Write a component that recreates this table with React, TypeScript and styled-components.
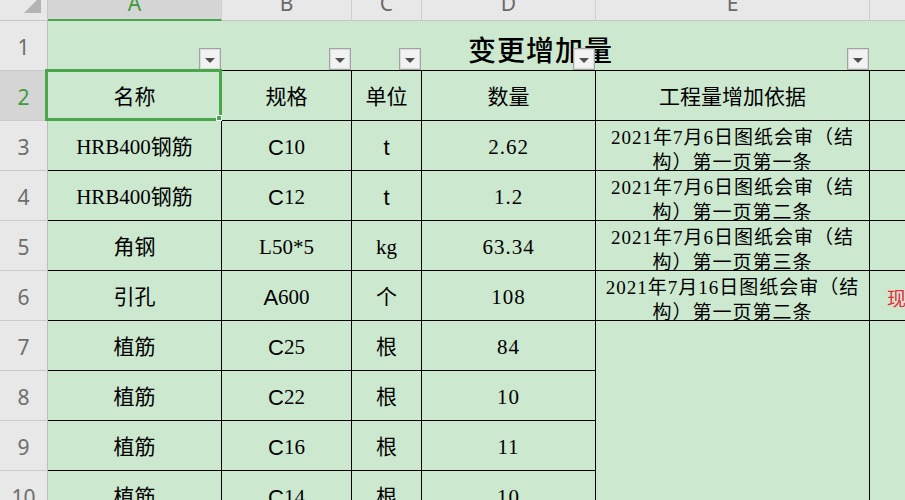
import React from "react";
import styled, { createGlobalStyle, css } from "styled-components";

const FILL = "#cce8cf";
const SEL = "#4aa64a";
const HEAD_BG = "#e8e8e8";
const HEAD_ACTIVE = "#d5d5d5";

const Global = createGlobalStyle`
  *, *::before, *::after { box-sizing: border-box; }
  html, body { margin: 0; padding: 0; overflow: hidden; background: #ffffff; }
  #root { width: 905px; height: 500px; overflow: hidden; }
`;

const Sheet = styled.div`
  display: grid;
  grid-template-columns: 48px 174px 130px 70px 174px 274px 200px;
  grid-template-rows: 21px repeat(10, 50px);
  width: max-content;
  font-family: "Liberation Serif", "Noto Sans CJK SC", serif;
  color: #000;
`;

const Corner = styled.div`
  background: ${HEAD_BG};
  border-right: 1px solid #c6c6c6;
  border-bottom: 1px solid #c6c6c6;
  display: flex;
  justify-content: flex-end;
  align-items: flex-end;
  padding: 0 6px 7px 0;
`;

const ColHead = styled.div<{ $active?: boolean }>`
  background: ${(p) => (p.$active ? HEAD_ACTIVE : HEAD_BG)};
  border-right: 1px solid #cfcfcf;
  border-bottom: ${(p) => (p.$active ? `2px solid ${SEL}` : "1px solid #c6c6c6")};
  display: flex;
  justify-content: center;
  align-items: flex-start;
  overflow: hidden;
  font-family: "Noto Sans", "Liberation Sans", sans-serif;
  font-size: 21px;
  line-height: 21px;
  color: ${(p) => (p.$active ? "#3d9b3d" : "#6a6a6a")};
`;

const ColLabel = styled.span`
  margin-top: -7px;
`;

const RowHead = styled.div<{ $active?: boolean; $row?: number }>`
  ${(p) => p.$row !== undefined && css`grid-row: ${p.$row};`}
  grid-column: 1;
  background: ${(p) => (p.$active ? HEAD_ACTIVE : HEAD_BG)};
  border-right: 1px solid #bdbdbd;
  border-bottom: 1px solid #cbcbcb;
  display: flex;
  justify-content: center;
  align-items: center;
  padding-top: 3px;
  font-family: "Noto Sans", "Liberation Sans", sans-serif;
  font-size: 21px;
  line-height: 1;
  color: ${(p) => (p.$active ? "#3d9b3d" : "#6e6e6e")};
`;

const Cell = styled.div`
  position: relative;
  background: ${FILL};
  border-right: 1px solid #000;
  border-bottom: 1px solid #000;
  display: flex;
  justify-content: center;
  align-items: center;
  padding-top: 4px;
  font-size: 21px;
  line-height: 1;
  white-space: nowrap;
`;

const TitleCell = styled.div`
  grid-row: 2;
  grid-column: 2 / 8;
  background: ${FILL};
  border-bottom: 1px solid #000;
  display: flex;
  align-items: center;
  padding: 6px 0 0 420px;
`;

const Title = styled.span`
  font-family: "Noto Sans CJK SC", sans-serif;
  font-size: 28px;
  font-weight: 500;
  letter-spacing: 1px;
  line-height: 1;
`;

const FilterButton = styled.div<{ $col: number }>`
  grid-row: 2;
  grid-column: ${(p) => p.$col};
  justify-self: end;
  align-self: end;
  width: 22px;
  height: 22px;
  margin: 0 1px 1px 0;
  background: #f2f2f2;
  border: 1px solid #a3a3a3;
  box-shadow: inset 0 0 0 1px #dcdcdc;
  display: flex;
  justify-content: center;
  align-items: center;
  padding-top: 2px;
`;

const Arrow = styled.span`
  width: 0;
  height: 0;
  border-left: 5px solid transparent;
  border-right: 5px solid transparent;
  border-top: 5px solid #505050;
`;

const Selection = styled.div`
  position: absolute;
  top: -2px;
  left: -3px;
  right: -1px;
  bottom: -1px;
  border: 3px solid ${SEL};
  z-index: 3;
  pointer-events: none;
`;

const Handle = styled.span`
  position: absolute;
  right: -3px;
  bottom: -3px;
  width: 6px;
  height: 6px;
  background: ${SEL};
  border: 1px solid #ffffff;
`;

const Sans = styled.span`
  font-family: "Liberation Sans", Arial, sans-serif;
  font-size: 22px;
`;

const Qty = styled.span`
  letter-spacing: 1px;
`;

const BasisCell = styled.div<{ $span?: number }>`
  ${(p) => p.$span && css`grid-row: span ${p.$span};`}
  background: ${FILL};
  border-right: 1px solid #000;
  border-bottom: 1px solid #000;
  display: flex;
  flex-direction: column;
  align-items: center;
  justify-content: center;
  padding-top: 9px;
  font-size: 19px;
  letter-spacing: 1px;
  line-height: 25px;
  white-space: nowrap;
`;

const NoteCell = styled.div<{ $span?: number }>`
  ${(p) => p.$span && css`grid-row: span ${p.$span};`}
  background: ${FILL};
  border-right: 1px solid #000;
  border-bottom: 1px solid #000;
  display: flex;
  align-items: center;
  padding: 3px 0 0 17px;
  font-family: "Noto Sans CJK SC", sans-serif;
  font-size: 19px;
  color: #f0263a;
  white-space: nowrap;
  overflow: hidden;
`;

const Triangle = () => (
  <svg width="17" height="17" viewBox="0 0 17 17" style={{ display: "block" }}>
    <polygon points="17,0 17,17 0,17" fill="#b4b4b4" />
  </svg>
);

type Val = { sans?: string; text: string };

type Row = {
  n: number;
  name: string;
  spec: Val;
  unit: Val;
  qty: string;
  basis?: [string, string];
  note?: string;
};

const rows: Row[] = [
  { n: 3, name: "HRB400钢筋", spec: { sans: "C", text: "10" }, unit: { sans: "t", text: "" }, qty: "2.62", basis: ["2021年7月6日图纸会审（结", "构）第一页第一条"] },
  { n: 4, name: "HRB400钢筋", spec: { sans: "C", text: "12" }, unit: { sans: "t", text: "" }, qty: "1.2", basis: ["2021年7月6日图纸会审（结", "构）第一页第二条"] },
  { n: 5, name: "角钢", spec: { text: "L50*5" }, unit: { text: "kg" }, qty: "63.34", basis: ["2021年7月6日图纸会审（结", "构）第一页第三条"] },
  { n: 6, name: "引孔", spec: { sans: "A", text: "600" }, unit: { text: "个" }, qty: "108", basis: ["2021年7月16日图纸会审（结", "构）第一页第二条"], note: "现场" },
  { n: 7, name: "植筋", spec: { sans: "C", text: "25" }, unit: { text: "根" }, qty: "84" },
  { n: 8, name: "植筋", spec: { sans: "C", text: "22" }, unit: { text: "根" }, qty: "10" },
  { n: 9, name: "植筋", spec: { sans: "C", text: "16" }, unit: { text: "根" }, qty: "11" },
  { n: 10, name: "植筋", spec: { sans: "C", text: "14" }, unit: { text: "根" }, qty: "10" },
];

const ValueText = ({ v }: { v: Val }) => (
  <>
    {v.sans && <Sans>{v.sans}</Sans>}
    {v.text}
  </>
);

const columns = ["A", "B", "C", "D", "E", "F"];
const headers = ["名称", "规格", "单位", "数量", "工程量增加依据"];

export default function App() {
  return (
    <>
      <Global />
      <Sheet>
        <Corner>
          <Triangle />
        </Corner>
        {columns.map((c, i) => (
          <ColHead key={c} $active={i === 0}>
            <ColLabel>{c}</ColLabel>
          </ColHead>
        ))}

        <RowHead $row={2}>1</RowHead>
        <TitleCell>
          <Title>变更增加量</Title>
        </TitleCell>
        {[2, 3, 4, 5, 6].map((col) => (
          <FilterButton key={col} $col={col}>
            <Arrow />
          </FilterButton>
        ))}

        <RowHead $row={3} $active>
          2
        </RowHead>
        {headers.map((h, i) => (
          <Cell key={h}>
            {h}
            {i === 0 && (
              <Selection>
                <Handle />
              </Selection>
            )}
          </Cell>
        ))}
        <Cell />

        {rows.map((r) => (
          <React.Fragment key={r.n}>
            <RowHead>{r.n}</RowHead>
            <Cell>{r.name}</Cell>
            <Cell>
              <ValueText v={r.spec} />
            </Cell>
            <Cell>
              <ValueText v={r.unit} />
            </Cell>
            <Cell>
              <Qty>{r.qty}</Qty>
            </Cell>
            {r.basis && (
              <>
                <BasisCell>
                  <span>{r.basis[0]}</span>
                  <span>{r.basis[1]}</span>
                </BasisCell>
                <NoteCell>{r.note}</NoteCell>
              </>
            )}
            {r.n === 7 && (
              <>
                <BasisCell $span={4} />
                <NoteCell $span={4} />
              </>
            )}
          </React.Fragment>
        ))}
      </Sheet>
    </>
  );
}
